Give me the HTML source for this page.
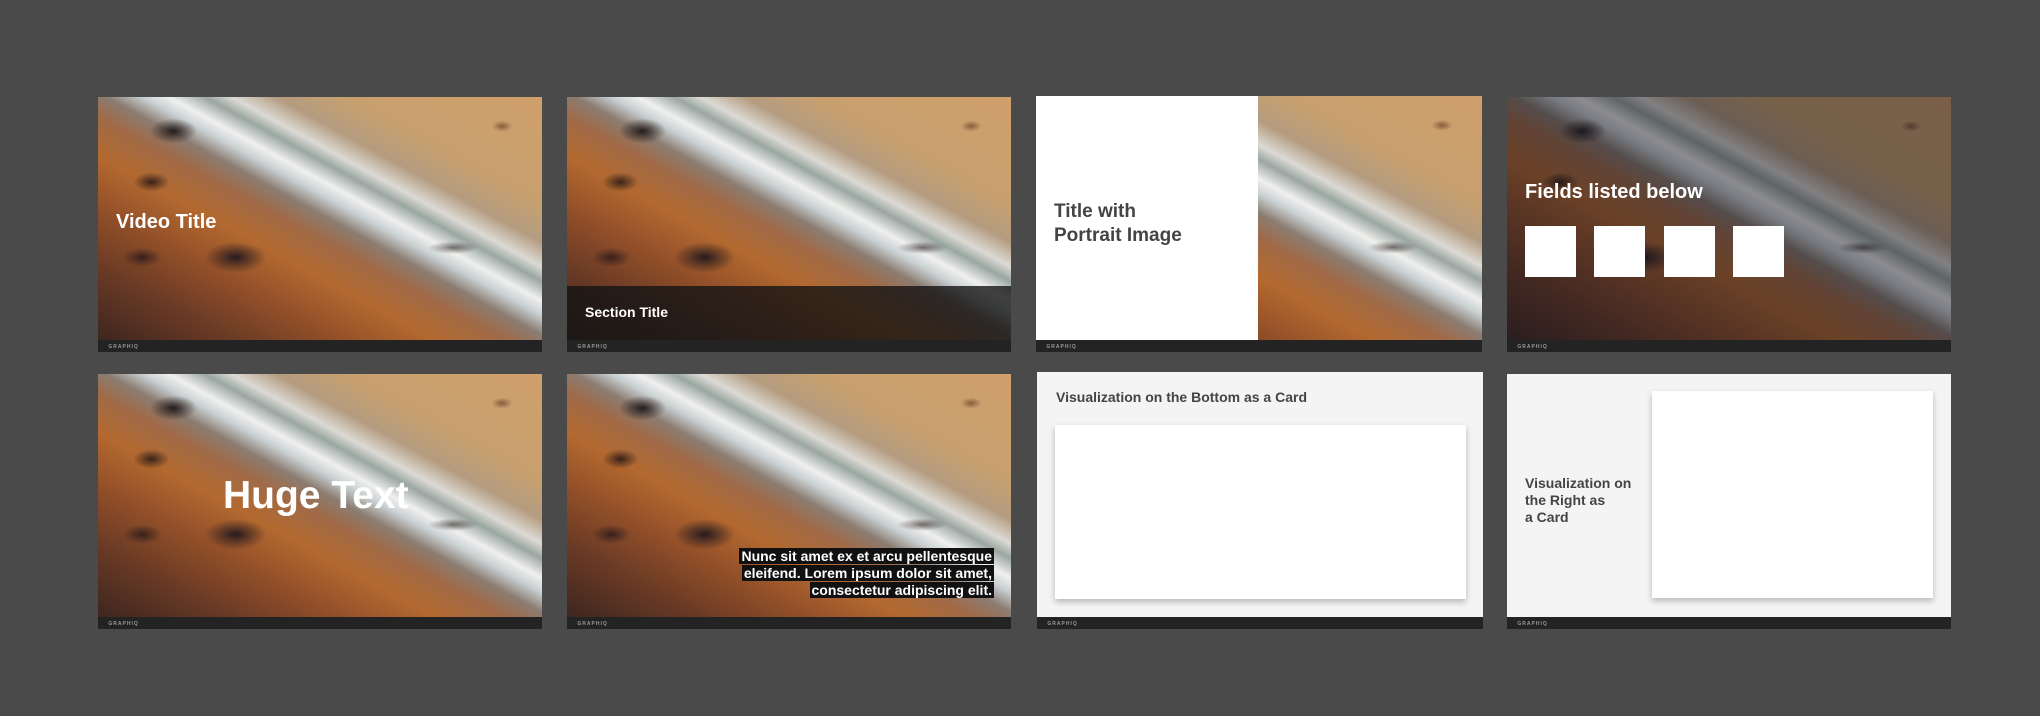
<!DOCTYPE html>
<html><head><meta charset="utf-8"><style>
*{margin:0;padding:0;box-sizing:border-box}
body{width:2040px;height:716px;background:#4a4a4a;position:relative;overflow:hidden;font-family:"Liberation Sans",Arial,sans-serif;font-weight:bold}
.card{position:absolute;width:444px;height:255px;overflow:hidden}
.img{position:absolute;left:0;top:0;right:0;height:243px;
background:
radial-gradient(ellipse 34px 18px at 17% 14%,rgba(25,18,18,.9),transparent 70%),
radial-gradient(ellipse 26px 14px at 12% 35%,rgba(35,22,20,.85),transparent 70%),
radial-gradient(ellipse 44px 22px at 31% 66%,rgba(25,20,30,.9),transparent 70%),
radial-gradient(ellipse 28px 14px at 10% 66%,rgba(30,20,25,.75),transparent 70%),
radial-gradient(ellipse 36px 9px at 80% 62%,rgba(40,30,30,.6),transparent 70%),
radial-gradient(ellipse 15px 8px at 91% 12%,rgba(90,50,30,.6),transparent 70%),
linear-gradient(155deg,rgba(0,0,0,0) 60%,rgba(0,0,0,0) 100%),
linear-gradient(to top right,#3e261f 0%,#6a3a25 15%,#955129 28%,#b3692f 38%,#a06a48 46%,#8b7d72 51%,#c9d0d2 55%,#f0f0ee 58%,#9aa6a2 62%,#dcdad4 65%,#b49c80 70%,#c8a06e 78%,#cf9f6c 100%);}
.foot{position:absolute;left:0;right:0;bottom:0;height:12px;background:#232323;color:#999;font-size:5px;letter-spacing:1px;padding:4px 0 0 7px}
.t{position:absolute;color:#fff}
.sq{position:absolute;top:129px;width:51px;height:51px;background:#fff}
.hl span{background:#111;padding:0 2px;box-decoration-break:clone;-webkit-box-decoration-break:clone}
</style></head><body>

<div class="card" style="left:98px;top:97px"><div class="img"></div>
<div class="t" style="left:18px;top:114px;font-size:20px">Video Title</div>
<div class="foot">᨜ GRAPHIQ</div></div>

<div class="card" style="left:567px;top:97px"><div class="img"></div>
<div style="position:absolute;left:0;right:0;top:189px;height:54px;background:rgba(20,20,20,.8)"></div>
<div class="t" style="left:18px;top:207px;font-size:14px">Section Title</div>
<div class="foot">᨜ GRAPHIQ</div></div>

<div class="card" style="left:1036px;top:96px;width:446px;height:256px"><div class="img" style="height:244px"></div>
<div style="position:absolute;left:0;top:0;width:222px;height:244px;background:#fff"></div>
<div class="t" style="left:18px;top:104px;font-size:19px;color:#444;line-height:24px">Title with<br>Portrait Image</div>
<div class="foot">᨜ GRAPHIQ</div></div>

<div class="card" style="left:1507px;top:97px"><div class="img"></div>
<div style="position:absolute;left:0;right:0;top:0;height:243px;background:rgba(20,20,30,.45)"></div>
<div class="t" style="left:18px;top:84px;font-size:20px">Fields listed below</div>
<div class="sq" style="left:18px"></div><div class="sq" style="left:87px"></div><div class="sq" style="left:157px"></div><div class="sq" style="left:226px"></div>
<div class="foot">᨜ GRAPHIQ</div></div>

<div class="card" style="left:98px;top:374px"><div class="img"></div>
<div class="t" style="left:125px;top:100px;font-size:39px">Huge Text</div>
<div class="foot">᨜ GRAPHIQ</div></div>

<div class="card" style="left:567px;top:374px"><div class="img"></div>
<div class="t hl" style="right:17px;top:174px;font-size:14px;line-height:17px;text-align:right;width:300px"><span>Nunc sit amet ex et arcu pellentesque eleifend. Lorem ipsum dolor sit amet, consectetur adipiscing elit.</span></div>
<div class="foot">᨜ GRAPHIQ</div></div>

<div class="card" style="left:1037px;top:372px;width:446px;height:257px;background:#f4f4f4">
<div class="t" style="left:19px;top:17px;font-size:14px;color:#444">Visualization on the Bottom as a Card</div>
<div style="position:absolute;left:18px;top:53px;width:411px;height:174px;background:#fff;box-shadow:0 3px 6px rgba(0,0,0,.25)"></div>
<div class="foot">᨜ GRAPHIQ</div></div>

<div class="card" style="left:1507px;top:374px;height:255px;background:#f4f4f4">
<div class="t" style="left:18px;top:101px;font-size:14px;color:#444;line-height:17px">Visualization on<br>the Right as<br>a Card</div>
<div style="position:absolute;left:145px;top:17px;width:281px;height:207px;background:#fff;box-shadow:0 3px 6px rgba(0,0,0,.25)"></div>
<div class="foot">᨜ GRAPHIQ</div></div>

</body></html>
